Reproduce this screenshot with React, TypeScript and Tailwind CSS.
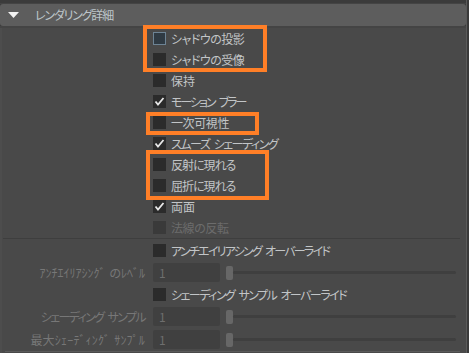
import React from "react";

const Check = () => (
  <svg width="13" height="13" viewBox="0 0 13 13" className="block">
    <polyline points="2.5,6.5 5,9.5 10.5,3" fill="none" stroke="#e8e8e8" strokeWidth="1.8" />
  </svg>
);

function Box({ checked, hl, disabled }: { checked?: boolean; hl?: boolean; disabled?: boolean }) {
  return (
    <div
      className={
        hl
          ? "w-[13px] h-[13px] shrink-0 border border-[#6d8394] bg-[#2f3a43]"
          : disabled
          ? "w-[13px] h-[13px] shrink-0 bg-[#3a3a3a]"
          : "w-[13px] h-[13px] shrink-0 bg-[#2b2b2b]"
      }
    >
      {checked ? <Check /> : null}
    </div>
  );
}

function Words({ text, tr }: { text: string; tr: string }) {
  const parts = text.split(" ");
  return (
    <span className="flex items-center gap-[4px] whitespace-nowrap">
      {parts.map((p, i) => (
        <span key={i} className={tr}>
          {p}
        </span>
      ))}
    </span>
  );
}

function CheckRow({
  label,
  checked,
  hl,
  disabled,
  tr = "",
}: {
  label: string;
  checked?: boolean;
  hl?: boolean;
  disabled?: boolean;
  tr?: string;
}) {
  return (
    <div className="h-[21px] flex items-center pl-[153px] gap-[5px]">
      <Box checked={checked} hl={hl} disabled={disabled} />
      <span
        className={disabled ? "text-[12px] leading-none text-[#6c6c6c]" : "text-[12px] leading-none text-[#c2c5c7]"}
      >
        <Words text={label} tr={tr} />
      </span>
    </div>
  );
}

function SliderRow({ label, tr = "" }: { label: string; tr?: string }) {
  return (
    <div className="h-[23px] flex items-center">
      <div className="w-[145px] flex justify-end text-[12px] leading-none text-[#777777]">
        <Words text={label} tr={tr} />
      </div>
      <div className="ml-[8px] w-[67px] h-[19px] rounded-[2px] bg-[#404040] flex items-center pl-[6px] text-[12px] text-[#6e6e6e] leading-none">
        1
      </div>
      <div className="ml-[6px] w-[7px] h-[14px] rounded-[2px] bg-[#676767] shrink-0" />
      <div className="flex-1 h-[3px] rounded-full bg-[#3f3f3f] mr-[10px]" />
    </div>
  );
}

export default function App() {
  return (
    <div className="w-[469px] h-[353px] flex bg-[#3a3a3a] overflow-hidden relative font-['Noto_Sans_CJK_JP','Noto_Sans',sans-serif] [font-feature-settings:'palt']">
      <div className="w-[466px] flex flex-col">
        <div className="h-[4px] bg-[#3b3b3b] border-b border-[#444444]" />
        <div className="h-[22px] bg-[#5d5d5d] rounded-[3px] flex items-center shrink-0">
          <svg width="11" height="6" viewBox="0 0 11 6" className="ml-[8px] -mt-[1px]">
            <polygon points="0,0 11,0 5.5,6" fill="#f2f2f2" />
          </svg>
          <span className="ml-[16px] text-[12px] leading-none text-[#bec6ca] tracking-[-1.2px]">レンダリング詳細</span>
        </div>
        <div className="h-[2px] bg-[#444444]" />
        <div className="flex-1 bg-[#494949] flex flex-col border-l-2 border-[#4d4d4d]">
          <div className="-ml-[2px]">
            <CheckRow label="シャドウの投影" hl tr="tracking-[-0.5px]" />
            <CheckRow label="シャドウの受像" tr="tracking-[-0.5px]" />
            <CheckRow label="保持" />
            <CheckRow label="モーション ブラー" checked tr="tracking-[-2px]" />
            <CheckRow label="一次可視性" tr="tracking-[-0.4px]" />
            <CheckRow label="スムーズ シェーディング" checked tr="tracking-[-1.45px]" />
            <CheckRow label="反射に現れる" tr="tracking-[-1px]" />
            <CheckRow label="屈折に現れる" tr="tracking-[-1px]" />
            <CheckRow label="両面" checked />
            <CheckRow label="法線の反転" disabled tr="tracking-[-0.4px]" />
            <div className="h-px bg-[#3e3e3e] ml-[3px] mr-[6px] mb-px" />
            <CheckRow label="アンチエイリアシング オーバーライド" tr="tracking-[-1.75px]" />
            <SliderRow label="ｱﾝﾁｴｲﾘｱｼﾝｸﾞ のﾚﾍﾞﾙ" />
            <CheckRow label="シェーディング サンプル オーバーライド" tr="tracking-[-1.5px]" />
            <SliderRow label="シェーディング サンプル" tr="tracking-[-1.6px]" />
            <SliderRow label="最大ｼｪｰﾃﾞｨﾝｸﾞ ｻﾝﾌﾟﾙ" tr="tracking-[0.2px]" />
            <div className="h-px bg-[#5a5a5a] ml-[5px] mr-[6px]" />
          </div>
        </div>
      </div>
      <div className="w-[3px] border-l border-[#5a5a5a] bg-[#3a3a3a]" />

      <div className="absolute left-[143px] top-[25px] w-[124px] h-[47px] border-4 border-[#ff7f27]" />
      <div className="absolute left-[146px] top-[112px] w-[113px] h-[23px] border-4 border-[#ff7f27]" />
      <div className="absolute left-[146px] top-[150px] w-[123px] h-[50px] border-4 border-[#ff7f27]" />
    </div>
  );
}
